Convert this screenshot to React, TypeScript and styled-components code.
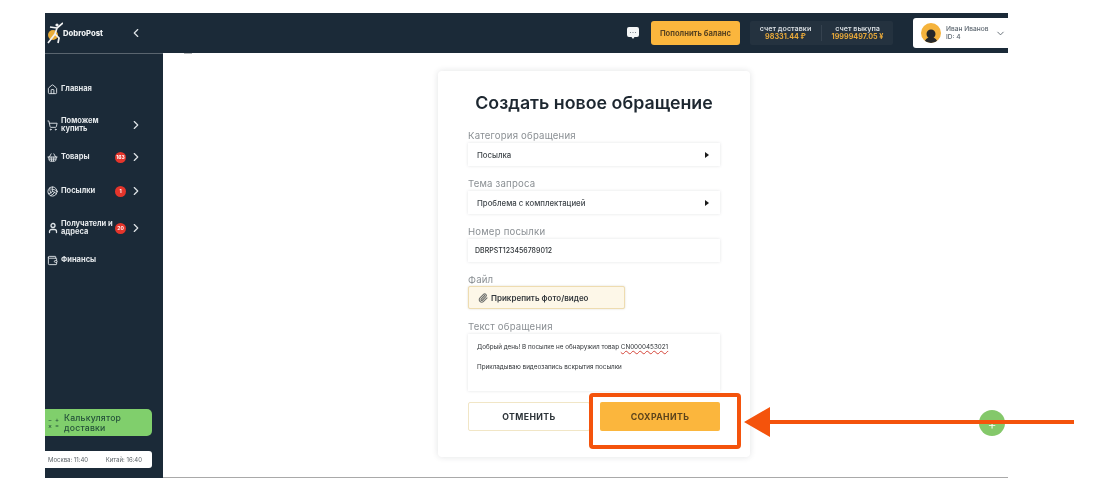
import React from 'react';
import styled, { createGlobalStyle } from 'styled-components';
import {
  ChevronDown,
  ChevronLeft,
  ChevronRight,
  Home,
  Paperclip,
  ShoppingBasket,
  ShoppingCart,
  User,
  UserRound,
  Wallet,
  Volleyball,
} from 'lucide-react';

const GlobalStyle = createGlobalStyle`
  html, body {
    margin: 0;
    background: #ffffff;
  }
  * {
    box-sizing: border-box;
  }
`;

const Page = styled.div`
  position: relative;
  width: 1106px;
  height: 504px;
  padding: 13px 98px 26px 45px;
  font-family: Inter, 'Open Sans', sans-serif;
  overflow: hidden;
  filter: blur(0.35px);
`;

const Screen = styled.div`
  height: 465px;
  display: flex;
  flex-direction: column;
`;

const Topbar = styled.header`
  height: 40px;
  flex-shrink: 0;
  background: #1b2a38;
  display: flex;
  align-items: center;
  padding-left: 2px;
  color: #fff;
`;

const Logo = styled.div`
  width: 82px;
  display: flex;
  align-items: center;
  gap: 0;
  font-size: 7.7px;
  font-weight: 800;
  color: #eef1f3;
`;

const Collapse = styled.div`
  display: flex;
  color: #dfe4e8;
`;

const TopRight = styled.div`
  margin-left: auto;
  display: flex;
  align-items: center;
`;

const ChatIcon = styled.div`
  display: flex;
  margin-right: 11px;
`;

const TopUp = styled.div`
  width: 89px;
  height: 24px;
  background: #fbb63d;
  border-radius: 3px;
  display: flex;
  align-items: center;
  justify-content: center;
  font-size: 7.6px;
  font-weight: 700;
  color: #5a4420;
  margin-right: 10px;
`;

const Balances = styled.div`
  width: 143px;
  height: 24px;
  background: #24323f;
  border-radius: 2px;
  display: flex;
  align-items: center;
  margin-right: 20px;
`;

const Balance = styled.div<{ $divider?: boolean }>`
  flex: 1;
  text-align: center;
  font-size: 7.2px;
  font-weight: 600;
  line-height: 8px;
  color: #d9dee2;
  white-space: nowrap;
  border-left: ${(p) => (p.$divider ? '1px solid #35424f' : 'none')};
`;

const BalanceValue = styled.div`
  color: #e8a93a;
  font-weight: 700;
`;

const UserCard = styled.div`
  width: 95px;
  height: 30px;
  background: #fff;
  border-radius: 3px 0 0 3px;
  display: flex;
  align-items: center;
  padding-left: 8px;
  gap: 5px;
  color: #5d6770;
`;

const Avatar = styled.div`
  width: 20px;
  height: 20px;
  border-radius: 50%;
  background: #f5b33c;
  color: #26282a;
  display: flex;
  align-items: flex-end;
  justify-content: center;
  overflow: hidden;
  flex-shrink: 0;
`;

const UserText = styled.div`
  font-size: 6.6px;
  line-height: 8px;
  font-weight: 500;
  width: 44px;
  white-space: nowrap;
`;

const Body = styled.div`
  flex: 1;
  display: flex;
  min-height: 0;
`;

const Sidebar = styled.aside`
  width: 118px;
  flex-shrink: 0;
  background: #1b2a38;
  border-top: 1px solid #5a656f;
  display: flex;
  flex-direction: column;
  padding-top: 18px;
  padding-bottom: 10px;
`;

const NavRow = styled.div<{ $h: number }>`
  height: ${(p) => p.$h}px;
  display: flex;
  align-items: center;
  color: #dfe4e8;
`;

const NavIcon = styled.div`
  width: 15px;
  display: flex;
  justify-content: center;
  flex-shrink: 0;
`;

const NavLabel = styled.div`
  font-size: 7.5px;
  font-weight: 700;
  line-height: 8px;
  padding-left: 1px;
  width: 55px;
  color: #e4e8eb;
  white-space: nowrap;
`;

const NavBadge = styled.div`
  width: 11px;
  height: 11px;
  border-radius: 50%;
  background: #e5352b;
  color: #fff;
  font-size: 5px;
  font-weight: 700;
  display: flex;
  align-items: center;
  justify-content: center;
`;

const NavChevron = styled.div<{ $noBadge?: boolean }>`
  display: flex;
  margin-left: ${(p) => (p.$noBadge ? '14px' : '3px')};
  color: #dfe4e8;
`;

const Calculator = styled.div`
  margin-top: auto;
  width: 107px;
  height: 27px;
  background: #80cf6c;
  border-radius: 0 5px 5px 0;
  display: flex;
  align-items: center;
  padding-left: 3px;
  gap: 4px;
  font-size: 8.7px;
  line-height: 10px;
  font-weight: 500;
  letter-spacing: 0.2px;
  color: #24513a;
`;

const CalcKeys = styled.div`
  display: grid;
  grid-template-columns: 5px 5px;
  gap: 2px;
  font-size: 6px;
  line-height: 4px;
  color: #24513a;
`;

const Clock = styled.div`
  margin-top: 15px;
  width: 107px;
  height: 17px;
  background: #fff;
  border-radius: 0 3px 3px 0;
  display: flex;
  align-items: center;
  justify-content: space-between;
  padding: 0 10px 0 3px;
  font-size: 6px;
  color: #5c6368;
`;

const Main = styled.main`
  position: relative;
  flex: 1;
  background: #fff;
  border-bottom: 1px solid #a9a9a9;
  padding: 18px 0 0 275px;
`;

const TopTick = styled.div`
  position: absolute;
  left: 21px;
  top: 0;
  width: 8px;
  height: 1px;
  background: #b5b8ba;
`;

const Card = styled.section`
  width: 312px;
  height: 386px;
  background: #fff;
  border-radius: 4px;
  box-shadow: 0 0 6px rgba(40, 50, 60, 0.14);
  padding: 20px 30px 0;
`;

const Title = styled.h1`
  margin: 0 0 15px;
  font-size: 17.8px;
  line-height: 23px;
  font-weight: 600;
  text-align: center;
  color: #1d2730;
  white-space: nowrap;
`;

const Field = styled.div`
  margin-bottom: 11px;
`;

const Label = styled.div`
  font-size: 9.6px;
  line-height: 13px;
  color: #8a8f93;
  letter-spacing: 0.2px;
`;

const Control = styled.div`
  height: 23px;
  margin-top: 1px;
  background: #fff;
  box-shadow: 0 0 3px rgba(50, 60, 70, 0.14);
  display: flex;
  align-items: center;
  justify-content: space-between;
  padding: 0 11px 0 9px;
  font-size: 7.8px;
  font-weight: 500;
  color: #41474c;
`;

const Caret = styled.span`
  width: 0;
  height: 0;
  border-left: 4px solid #1a1a1a;
  border-top: 3px solid transparent;
  border-bottom: 3px solid transparent;
`;

const SerialInput = styled(Control)`
  padding-left: 7px;
  font-size: 7px;
  color: #2f3438;
`;

const Attach = styled.div`
  width: 157px;
  height: 23px;
  background: #fdf7e8;
  border: 1px solid #eedcb0;
  border-radius: 2px;
  box-shadow: 0 0 2px rgba(120, 100, 50, 0.25);
  display: flex;
  align-items: center;
  gap: 3px;
  padding-left: 9px;
  font-size: 8px;
  font-weight: 600;
  color: #33383c;
`;

const TextArea = styled.div`
  position: relative;
  height: 57px;
  margin-top: 1px;
  background: #fff;
  box-shadow: 0 0 3px rgba(50, 60, 70, 0.14);
  padding: 9px 9px;
  font-size: 6.3px;
  line-height: 9px;
  color: #2e3236;
`;

const Misspelled = styled.span`
  text-decoration: underline wavy #d5453a 0.5px;
`;

const TextLine = styled.div`
  margin-bottom: 11px;
  white-space: nowrap;
`;

const Actions = styled.div`
  display: flex;
  justify-content: space-between;
  margin-top: 4px;
`;

const Button = styled.div<{ $primary?: boolean }>`
  height: 29px;
  width: ${(p) => (p.$primary ? '120px' : '122px')};
  border-radius: 2px;
  display: flex;
  align-items: center;
  justify-content: center;
  font-size: 8.7px;
  font-weight: 700;
  letter-spacing: 0.4px;
  color: ${(p) => (p.$primary ? '#5b431c' : '#2c3338')};
  background: ${(p) => (p.$primary ? '#fbb63d' : '#fff')};
  border: ${(p) => (p.$primary ? 'none' : '1px solid #f1e6c6')};
`;

const Fab = styled.div`
  position: absolute;
  left: 979px;
  top: 410px;
  width: 26px;
  height: 26px;
  border-radius: 50%;
  background: #84c86a;
  display: flex;
  align-items: center;
  justify-content: center;
  color: #fff;
  font-size: 14px;
  font-weight: 300;
`;

const Highlight = styled.div`
  position: absolute;
  left: 589px;
  top: 393px;
  width: 152px;
  height: 56px;
  border: 4px solid #f4530c;
  border-radius: 4px;
`;

const ArrowSvg = styled.svg`
  position: absolute;
  left: 744px;
  top: 405px;
`;

const nav = [
  { h: 34, label: 'Главная', icon: <Home size={11} /> },
  { h: 38, label: 'Поможем\nкупить', icon: <ShoppingCart size={11} />, arrow: true },
  { h: 26, label: 'Товары', icon: <ShoppingBasket size={11} />, badge: '163', arrow: true },
  { h: 42, label: 'Посылки', icon: <Volleyball size={11} />, badge: '1', arrow: true },
  { h: 32, label: 'Получатели и\nадреса', icon: <User size={12} strokeWidth={2.6} />, badge: '20', arrow: true },
  { h: 32, label: 'Финансы', icon: <Wallet size={11} /> },
];

export default function App() {
  return (
    <Page>
      <GlobalStyle />
      <Screen>
        <Topbar>
          <Logo>
            <svg width="16" height="26" viewBox="0 0 16 26">
              <circle cx="6" cy="15" r="5" fill="#e9ad3a" />
              <path d="M1 23 L8 14 L10 8 L16 3 M10 8 L3 7 M8 14 L12 18 L11 23" stroke="#f2f2f2" strokeWidth="1.7" fill="none" />
              <circle cx="10" cy="5" r="1.6" fill="#f2f2f2" />
            </svg>
            DobroPost
          </Logo>
          <Collapse>
            <ChevronLeft size={14} />
          </Collapse>
          <TopRight>
            <ChatIcon>
              <svg width="14" height="14" viewBox="0 0 14 14">
                <path d="M3 1 H11 A2 2 0 0 1 13 3 V9 A2 2 0 0 1 11 11 H8.5 L7 13 L5.5 11 H3 A2 2 0 0 1 1 9 V3 A2 2 0 0 1 3 1 Z" fill="#f4f6f7" />
                <circle cx="4.5" cy="6.5" r="0.6" fill="#6c7780" />
                <circle cx="7" cy="6.5" r="0.6" fill="#6c7780" />
                <circle cx="9.5" cy="6.5" r="0.6" fill="#6c7780" />
              </svg>
            </ChatIcon>
            <TopUp>Пополнить баланс</TopUp>
            <Balances>
              <Balance>
                счет доставки
                <BalanceValue>98331.44 ₽</BalanceValue>
              </Balance>
              <Balance $divider>
                счет выкупа
                <BalanceValue>19999497.05 ¥</BalanceValue>
              </Balance>
            </Balances>
            <UserCard>
              <Avatar>
                <UserRound size={18} fill="currentColor" style={{ marginBottom: -3 }} />
              </Avatar>
              <UserText>
                Иван Иванов
                <br />
                ID: 4
              </UserText>
              <ChevronDown size={11} />
            </UserCard>
          </TopRight>
        </Topbar>
        <Body>
          <Sidebar>
            {nav.map((item) => (
              <NavRow key={item.label} $h={item.h}>
                <NavIcon>{item.icon}</NavIcon>
                <NavLabel>
                  {item.label.split('\n').map((line) => (
                    <div key={line}>{line}</div>
                  ))}
                </NavLabel>
                {item.badge && <NavBadge>{item.badge}</NavBadge>}
                {item.arrow && (
                  <NavChevron $noBadge={!item.badge}>
                    <ChevronRight size={14} />
                  </NavChevron>
                )}
              </NavRow>
            ))}
            <Calculator>
              <CalcKeys>
                <span>−</span>
                <span>+</span>
                <span>×</span>
                <span>=</span>
              </CalcKeys>
              <div>
                Калькулятор
                <br />
                доставки
              </div>
            </Calculator>
            <Clock>
              <span>Москва: 11:40</span>
              <span>Китай: 16:40</span>
            </Clock>
          </Sidebar>
          <Main>
            <TopTick />
            <Card>
              <Title>Создать новое обращение</Title>
              <Field>
                <Label>Категория обращения</Label>
                <Control>
                  Посылка
                  <Caret />
                </Control>
              </Field>
              <Field>
                <Label>Тема запроса</Label>
                <Control>
                  Проблема с комплектацией
                  <Caret />
                </Control>
              </Field>
              <Field>
                <Label>Номер посылки</Label>
                <SerialInput>DBRPST123456789012</SerialInput>
              </Field>
              <Field>
                <Label>Файл</Label>
                <Attach>
                  <Paperclip size={10} strokeWidth={2.6} color="#6d6f6c" />
                  Прикрепить фото/видео
                </Attach>
              </Field>
              <Field>
                <Label>Текст обращения</Label>
                <TextArea>
                  <TextLine>
                    Добрый день! В посылке не обнаружил товар <Misspelled>CN0000453021</Misspelled>
                  </TextLine>
                  <TextLine>Прикладываю видеозапись вскрытия посылки</TextLine>
                </TextArea>
              </Field>
              <Actions>
                <Button>ОТМЕНИТЬ</Button>
                <Button $primary>СОХРАНИТЬ</Button>
              </Actions>
            </Card>
          </Main>
        </Body>
      </Screen>
      <Fab>+</Fab>
      <Highlight />
      <ArrowSvg width="332" height="34" viewBox="0 0 332 34">
        <path d="M0 17 L26 2 V15 H330 V19 H26 V32 Z" fill="#f4530c" />
      </ArrowSvg>
    </Page>
  );
}
